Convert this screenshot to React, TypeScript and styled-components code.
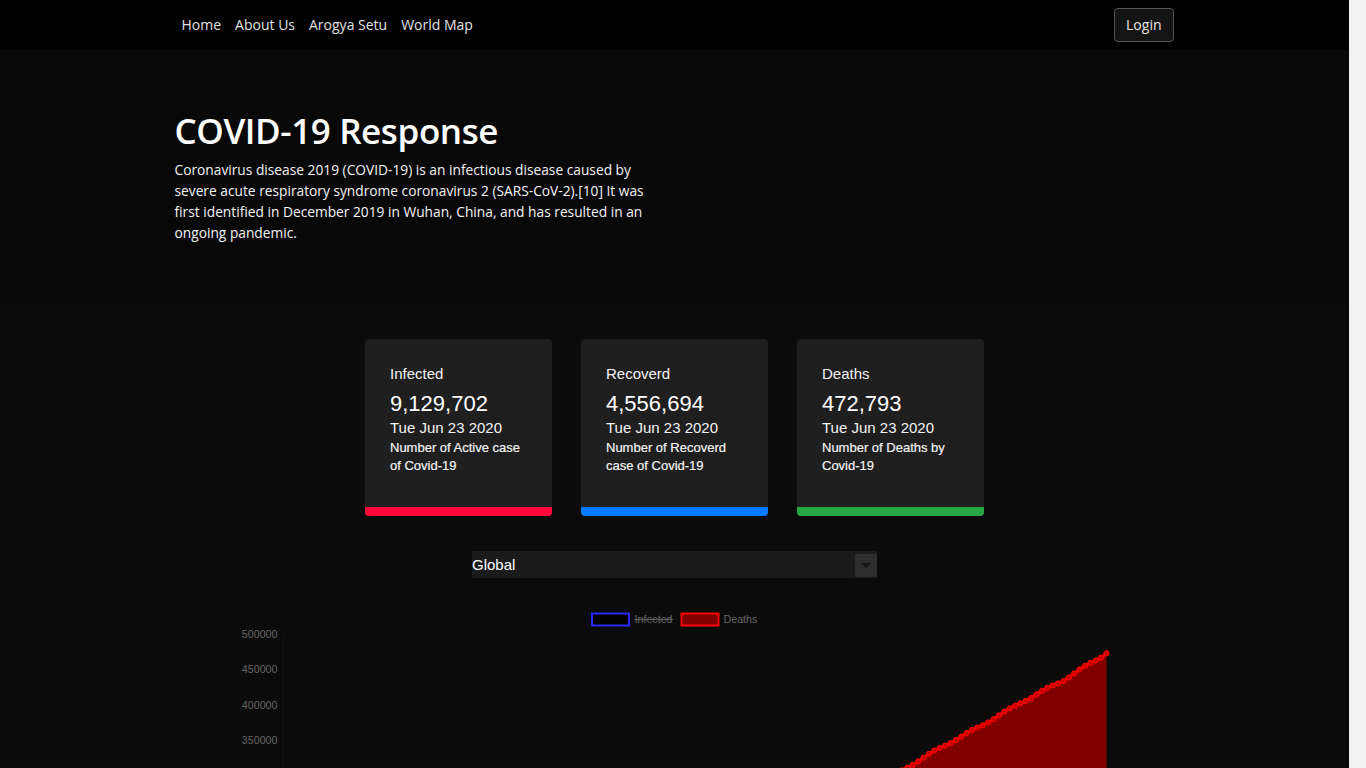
import React from "react";
import styled, { createGlobalStyle } from "styled-components";

const GlobalStyle = createGlobalStyle`
  html { margin: 0; padding: 0; background: #f1f1f1; }
  body {
    margin: 0 17px 0 0;
    padding: 0;
    background: #0b0b0b;
    color: #fff;
    font-family: "Open Sans", "Noto Sans", sans-serif;
  }
  * { box-sizing: border-box; }
`;

const Nav = styled.nav`
  height: 50px;
  background: #000;
`;

const Container = styled.div`
  width: 1000px;
  margin: 0 auto;
`;

const NavInner = styled(Container)`
  height: 100%;
  display: flex;
  align-items: center;
  justify-content: space-between;
`;

const NavLinks = styled.div`
  display: flex;
  align-items: center;
  gap: 14px;
  padding-left: 7px;
`;

const NavLink = styled.a`
  color: #e2e2e2;
  font-size: 14px;
  text-decoration: none;
  line-height: 20px;
`;

const LoginButton = styled.button`
  height: 34px;
  padding: 0 11px;
  background: #141414;
  color: #e6e6e6;
  border: 1px solid #555;
  border-radius: 4px;
  font-family: "Open Sans", "Noto Sans", sans-serif;
  font-size: 14px;
  margin-right: 1px;
  margin-bottom: 1px;
`;

const Hero = styled.header`
  background: #080808;
  height: 255px;
`;

const HeroInner = styled(Container)`
  padding-top: 57px;
`;

const Title = styled.h1`
  margin: 0 0 4px;
  font-size: 35px;
  line-height: 48px;
  font-weight: 600;
  color: #fff;
  letter-spacing: -0.4px;
`;

const Lead = styled.p`
  margin: 0;
  width: 484px;
  font-size: 13.75px;
  line-height: 21px;
  color: #f4f4f4;
`;

const Main = styled.main`
  background: #0b0b0b;
  padding: 34px 0 110px;
`;

const CardRow = styled.div`
  display: flex;
  justify-content: center;
  gap: 29px;
`;

const Card = styled.div`
  width: 187px;
  height: 177px;
  background: #1f1f1f;
  border-radius: 4px;
  overflow: hidden;
  display: flex;
  flex-direction: column;
  font-family: "Liberation Sans", Arial, sans-serif;
`;

const CardBody = styled.div`
  flex: 1;
  padding: 26px 20px 0 25px;
`;

const CardLabel = styled.div`
  font-size: 15px;
  line-height: 17px;
  color: #f2f2f2;
  margin-bottom: 9px;
`;

const CardValue = styled.div`
  font-size: 22px;
  line-height: 25px;
  color: #fff;
  margin-bottom: 3px;
`;

const CardDate = styled.div`
  font-size: 15px;
  line-height: 17px;
  color: #f2f2f2;
  margin-bottom: 3px;
`;

const CardDesc = styled.div`
  font-size: 13px;
  line-height: 18px;
  color: #f2f2f2;
  font-weight: 500;
  -webkit-text-stroke: 0.2px #f2f2f2;
`;

const CardBar = styled.div<{ $color: string }>`
  height: 9px;
  background: ${(p) => p.$color};
`;

const SelectBox = styled.div`
  width: 405px;
  height: 27px;
  margin: 35px auto 0;
  background: #1b1b1b;
  display: flex;
  align-items: center;
  justify-content: space-between;
  font-family: "Liberation Sans", Arial, sans-serif;
  font-size: 15px;
  line-height: 17px;
  color: #fff;
`;

const SelectText = styled.span`
  margin-top: -1px;
`;

const SelectArrow = styled.div`
  width: 22px;
  height: 23px;
  margin-top: 2px;
  background: #2e2e2e;
  display: flex;
  align-items: center;
  justify-content: center;
  &::after {
    content: "";
    border-left: 5px solid transparent;
    border-right: 5px solid transparent;
    border-top: 5px solid #141414;
  }
`;

const ChartWrap = styled.div`
  width: 900px;
  margin: 27px auto 0;
  font-family: "Liberation Sans", Arial, sans-serif;
`;

const anchors: [number, number][] = [
  [0, 17], [10, 259], [24, 1526], [39, 3000], [53, 6500], [60, 14600],
  [69, 42000], [76, 82000], [84, 134000], [91, 184000], [99, 234000],
  [106, 270000], [114, 303000], [121, 335000], [130, 372000],
  [137, 403000], [145, 435000], [153, 472793],
];

function valueAt(i: number): number {
  for (let k = 0; k < anchors.length - 1; k++) {
    const [a, va] = anchors[k];
    const [b, vb] = anchors[k + 1];
    if (i >= a && i <= b) {
      const t = (i - a) / (b - a);
      return va + (vb - va) * t;
    }
  }
  return anchors[anchors.length - 1][1];
}

const N = 154;
const X0 = 58.5;
const X1 = 881.5;
const Y0 = 384;
const scale = 355 / 500000;

const data = Array.from({ length: N }, (_, i) => {
  let v = valueAt(i);
  if (i > 0 && i < N - 1) v += 1400 * Math.sin((i * 2 * Math.PI) / 7) * (v / 472793);
  return v;
});

const pts = data.map((v, i) => ({
  x: X0 + ((X1 - X0) * i) / (N - 1),
  y: Y0 - v * scale,
}));

function dateLabel(i: number): string {
  const d = new Date(2020, 0, 22 + i);
  return `${d.getMonth() + 1}/${d.getDate()}/20`;
}

const yTicks = Array.from({ length: 11 }, (_, k) => k * 50000);

function Chart() {
  const line = pts.map((p) => `${p.x.toFixed(1)},${p.y.toFixed(1)}`).join(" ");
  const area = `${line} ${X1},${Y0} ${X0},${Y0}`;
  return (
    <svg width="900" height="470" viewBox="0 0 900 470">
      <g fontSize="10.7" fill="#666">
        <rect x="367" y="8.5" width="37" height="12" fill="#000" stroke="#2b2bff" strokeWidth="2" />
        <text x="409.5" y="18.3">Infected</text>
        <line x1="409.5" y1="14.6" x2="448" y2="14.6" stroke="#666" strokeWidth="1" />
        <rect x="456.5" y="8.5" width="37" height="12" fill="#800000" stroke="#ff0000" strokeWidth="2" />
        <text x="498.5" y="18.3">Deaths</text>
      </g>
      <line x1={X0 - 0.5} y1="29" x2={X0 - 0.5} y2={Y0 + 5} stroke="#121212" />
      {pts.filter((_, i) => i % 7 === 0).map((p, k) => (
        <line key={k} x1={p.x} y1="29" x2={p.x} y2={Y0} stroke="#0e0e0e" />
      ))}
      <g fontSize="10.7" fill="#666" textAnchor="end">
        {yTicks.map((t) => (
          <text key={t} x="52.5" y={Y0 - t * scale + 3.8}>
            {t}
          </text>
        ))}
      </g>
      <polygon points={area} fill="#800000" />
      <polyline points={line} fill="none" stroke="#ff0000" strokeWidth="3" strokeLinejoin="round" />
      {pts.map((p, i) => (
        <circle key={i} cx={p.x} cy={p.y} r="2.6" fill="#d00000" stroke="#ff0000" strokeWidth="1" />
      ))}
      <g fontSize="10.7" fill="#666" textAnchor="end">
        {pts.filter((_, i) => i % 7 === 0).map((p, k) => (
          <text key={k} x={p.x} y={Y0 + 14} transform={`rotate(-50 ${p.x} ${Y0 + 14})`}>
            {dateLabel(k * 7)}
          </text>
        ))}
      </g>
    </svg>
  );
}

const cards = [
  { label: "Infected", value: "9,129,702", desc: "Number of Active case of Covid-19", color: "#ff0a3a" },
  { label: "Recoverd", value: "4,556,694", desc: "Number of Recoverd case of Covid-19", color: "#007bff" },
  { label: "Deaths", value: "472,793", desc: "Number of Deaths by Covid-19", color: "#28a745" },
];

export default function App() {
  return (
    <>
      <GlobalStyle />
      <Nav>
        <NavInner>
          <NavLinks>
            <NavLink href="#">Home</NavLink>
            <NavLink href="#">About Us</NavLink>
            <NavLink href="#">Arogya Setu</NavLink>
            <NavLink href="#">World Map</NavLink>
          </NavLinks>
          <LoginButton>Login</LoginButton>
        </NavInner>
      </Nav>
      <Hero>
        <HeroInner>
          <Title>COVID-19 Response</Title>
          <Lead>
            Coronavirus disease 2019 (COVID-19) is an infectious disease caused by severe acute
            respiratory syndrome coronavirus 2 (SARS-CoV-2).[10] It was first identified in December
            2019 in Wuhan, China, and has resulted in an ongoing pandemic.
          </Lead>
        </HeroInner>
      </Hero>
      <Main>
        <CardRow>
          {cards.map((c) => (
            <Card key={c.label}>
              <CardBody>
                <CardLabel>{c.label}</CardLabel>
                <CardValue>{c.value}</CardValue>
                <CardDate>Tue Jun 23 2020</CardDate>
                <CardDesc>{c.desc}</CardDesc>
              </CardBody>
              <CardBar $color={c.color} />
            </Card>
          ))}
        </CardRow>
        <SelectBox>
          <SelectText>Global</SelectText>
          <SelectArrow />
        </SelectBox>
        <ChartWrap>
          <Chart />
        </ChartWrap>
      </Main>
    </>
  );
}
